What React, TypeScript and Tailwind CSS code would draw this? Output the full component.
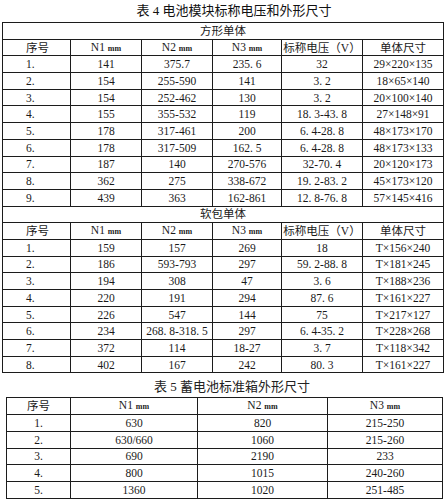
import React from "react";

const font = { fontFamily: '"Liberation Serif", "Noto Sans CJK SC", serif' };

// 方形单体 rows
const squareRows = [
  ["1.", "141", "375.7", "235. 6", "32", "29×220×135"],
  ["2.", "154", "255-590", "141", "3. 2", "18×65×140"],
  ["3.", "154", "252-462", "130", "3. 2", "20×100×140"],
  ["4.", "155", "355-532", "119", "18. 3-43. 8", "27×148×91"],
  ["5.", "178", "317-461", "200", "6. 4-28. 8", "48×173×170"],
  ["6.", "178", "317-509", "162. 5", "6. 4-28. 8", "48×173×133"],
  ["7.", "187", "140", "270-576", "32-70. 4", "20×120×173"],
  ["8.", "362", "275", "338-672", "19. 2-83. 2", "45×173×120"],
  ["9.", "439", "363", "162-861", "12. 8-76. 8", "57×145×416"],
];

// 软包单体 rows
const pouchRows = [
  ["1.", "159", "157", "269", "18", "T×156×240"],
  ["2.", "186", "593-793", "297", "59. 2-88. 8", "T×181×245"],
  ["3.", "194", "308", "47", "3. 6", "T×188×236"],
  ["4.", "220", "191", "294", "87. 6", "T×161×227"],
  ["5.", "226", "547", "144", "75", "T×217×127"],
  ["6.", "234", "268. 8-318. 5", "297", "6. 4-35. 2", "T×228×268"],
  ["7.", "372", "114", "18-27", "3. 7", "T×118×342"],
  ["8.", "402", "167", "242", "80. 3", "T×161×227"],
];

const boxRows = [
  ["1.", "630", "820", "215-250"],
  ["2.", "630/660", "1060", "215-260"],
  ["3.", "690", "2190", "233"],
  ["4.", "800", "1015", "240-260"],
  ["5.", "1360", "1020", "251-485"],
];

const td =
  "border border-[#1c1c1c] h-[16.7px] p-0 leading-[12px] whitespace-nowrap text-center align-middle";
const tdFirst =
  "border border-[#1c1c1c] h-[16.7px] p-0 pl-[23px] leading-[12px] whitespace-nowrap text-left align-middle";

function Mm() {
  return <span className="text-[8px] font-bold leading-[12px]">mm</span>;
}

function HeaderRow() {
  return (
    <tr>
      <td className={tdFirst}>序号</td>
      <td className={td}>N1 <Mm /></td>
      <td className={td}>N2 <Mm /></td>
      <td className={td}>N3 <Mm /></td>
      <td className={td}>标称电压（V）</td>
      <td className={td}>单体尺寸</td>
    </tr>
  );
}

function SectionRow({ label }: { label: string }) {
  return (
    <tr>
      <td colSpan={6} className={td}>
        {label}
      </td>
    </tr>
  );
}

function DataRows({ rows }: { rows: string[][] }) {
  return (
    <>
      {rows.map((r) => (
        <tr key={r[0]}>
          {r.map((c, i) => (
            <td key={i} className={i === 0 ? tdFirst : td}>
              {c}
            </td>
          ))}
        </tr>
      ))}
    </>
  );
}

export default function App() {
  return (
    <div className="w-[446px] h-[499px] bg-white text-[#1a1a1a] overflow-hidden" style={font}>
      <div className="h-[22px] flex items-center justify-center pl-[22px] text-[13px] text-[#111]">
        表 4 电池模块标称电压和外形尺寸
      </div>
      <table className="ml-[2px] w-[441px] table-fixed border-collapse text-[11.5px]">
        <colgroup>
          <col className="w-[68px]" />
          <col className="w-[71px]" />
          <col className="w-[71px]" />
          <col className="w-[69px]" />
          <col className="w-[81px]" />
          <col className="w-[81px]" />
        </colgroup>
        <tbody>
          <SectionRow label="方形单体" />
          <HeaderRow />
          <DataRows rows={squareRows} />
          <SectionRow label="软包单体" />
          <HeaderRow />
          <DataRows rows={pouchRows} />
        </tbody>
      </table>
      <div className="h-[24px] flex items-center justify-center pl-[18px] pt-[2px] text-[13px] text-[#222]">
        表 5 蓄电池标准箱外形尺寸
      </div>
      <table className="ml-[6px] w-[436px] table-fixed border-collapse text-[11.5px]">
        <colgroup>
          <col className="w-[64px]" />
          <col className="w-[127px]" />
          <col className="w-[130px]" />
          <col className="w-[115px]" />
        </colgroup>
        <tbody>
          <tr>
            <td className={td}>序号</td>
            <td className={td}>N1 <Mm /></td>
            <td className={td}>N2 <Mm /></td>
            <td className={td}>N3 <Mm /></td>
          </tr>
          {boxRows.map((r) => (
            <tr key={r[0]}>
              {r.map((c, i) => (
                <td key={i} className={td}>
                  {c}
                </td>
              ))}
            </tr>
          ))}
        </tbody>
      </table>
    </div>
  );
}
